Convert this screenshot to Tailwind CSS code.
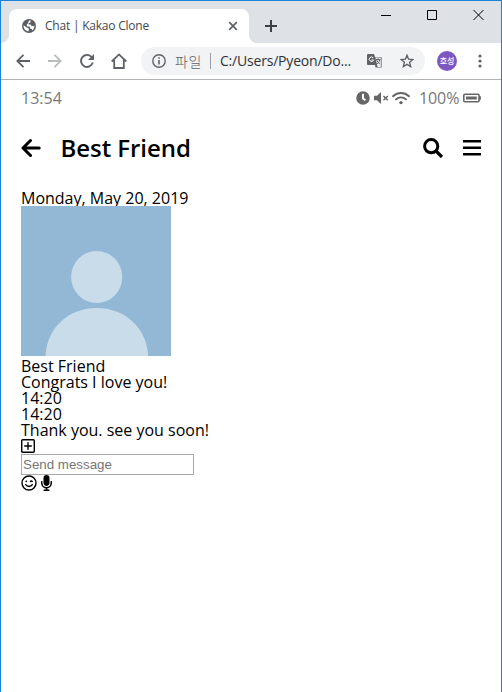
<!DOCTYPE html>
<html lang="en">
<head>
<meta charset="utf-8">
<title>Chat | Kakao Clone</title>
<script src="https://cdn.jsdelivr.net/npm/@tailwindcss/browser@4"></script>
</head>
<body class="bg-white">
<div class="flex h-[692px] w-[502px] flex-col overflow-hidden border-x border-t border-[#1883d7] bg-white">
  <!-- Tab strip -->
  <div class="flex h-[42px] shrink-0 bg-[#dee1e6]">
    <div class="flex w-2 items-end bg-white"><div class="h-full w-2 rounded-br-lg bg-[#dee1e6]"></div></div>
    <div class="bg-[#dee1e6] pt-2">
      <div class="flex h-[34px] w-[240px] items-center rounded-t-lg bg-white pl-[13px] pr-[11px]">
        <svg class="size-[14px]" viewBox="0 0 14 14"><circle cx="7" cy="7" r="7" fill="#5a5d61"/><path d="M1.500 6.200 4.700 8.400 6.700 9.200V12.300C3.600 12.200 1.400 9.600 1.500 6.200ZM7 1.600h1.800L8.300 3.400 6.600 4.200v1.400h2.200l.8 1.600 2.800-.5c.1 2-.8 3.700-2.200 4.700L9.600 9.800H8.300L7.600 7.600H5L4.700 5.800 5.800 4.600Z" fill="#fff"/></svg>
        <span class="ml-[9px] whitespace-nowrap font-['Open_Sans','Noto_Sans_CJK_KR',sans-serif] text-[12px] leading-4 tracking-[-0.22px] text-[#45484c]">Chat | Kakao Clone</span>
        <svg class="ml-auto size-[10px]" viewBox="0 0 10 10" stroke="#5f6368" stroke-width="1.7"><path d="m1.200 1.200 7.600 7.600m0-7.600L1.200 8.800"/></svg>
      </div>
    </div>
    <div class="flex w-2 bg-white"><div class="h-full w-2 rounded-bl-lg bg-[#dee1e6]"></div></div>
    <div class="flex flex-1 pl-2">
      <svg class="mt-[19px] size-3" viewBox="0 0 12 12" stroke="#3c4043" stroke-width="2"><path d="M6 0v12M0 6h12"/></svg>
      <svg class="ml-auto mr-[17px] mt-2 h-3 w-[103px]" viewBox="0 0 103 12" fill="none" stroke="#000"><path d="M0 6.500h10M46.500 1.500h9v9h-9z"/><path d="m92.500 1 10 10m0-10-10 10"/></svg>
    </div>
  </div>
  <!-- Toolbar -->
  <div class="flex h-9 shrink-0 items-center pl-[15px] text-[#5f6368]">
    <svg class="size-[14px] shrink-0" viewBox="0 0 14 14" fill="none" stroke="#5f6368" stroke-width="1.8"><path d="M14 7H1.500M7.500.800 1.300 7l6.200 6.200"/></svg>
    <svg class="ml-[18px] size-[14px] shrink-0" viewBox="0 0 14 14" fill="none" stroke="#babcbe" stroke-width="1.800"><path d="M0 7h12.500M6.500.800 12.700 7l-6.200 6.200"/></svg>
    <svg class="ml-[18px] size-[14px] shrink-0" viewBox="0 0 14 14" fill="none" stroke="#5f6368" stroke-width="1.900"><path d="M12.800 8.600A6 6 0 1 1 11.400 2.800L12.500 4"/><path d="M14 0v6H8Z" fill="#5f6368" stroke="none"/></svg>
    <svg class="ml-[17px] h-4 w-4 shrink-0" viewBox="0 0 16 16" fill="none" stroke="#5f6368" stroke-width="1.800"><path d="M.700 8.500 8 1.400l7.300 7.100M3.200 7v8h9.600V7"/></svg>
    <div class="ml-[14px] flex h-7 w-[284px] shrink-0 items-center rounded-full bg-[#f1f3f4] pl-[11px] pr-[11px]">
      <svg class="size-[14px] shrink-0" viewBox="0 0 14 14" fill="none" stroke="#5f6368" stroke-width="1.400"><circle cx="7" cy="7" r="6.200"/><path d="M7 6v4.500M7 3.300v1.500" stroke-width="1.600"/></svg>
      <span class="ml-[9px] w-[31px] whitespace-nowrap font-['Noto_Sans_CJK_KR',sans-serif] text-[14px] font-light leading-[18px] tracking-[0.6px] text-[#5f6368]">파일</span>
      <span class="ml-1 h-4 w-px bg-[#9a9da1]"></span>
      <span class="ml-[9px] whitespace-nowrap font-['Open_Sans',sans-serif] text-[14px] leading-5 tracking-[-0.2px] text-[#303236]">C:/Users/Pyeon/Do...</span>
      <svg class="ml-auto h-[14px] w-[15px] shrink-0" viewBox="0 0 15 14"><path d="M0 1q0-1 1-1h6l1 3h6q.6 0 .6.600V13q0 .600-.6.600H8.500L8 11H1q-1 0-1-1Z" fill="#5f6368"/><path d="m8.400 3.600 2.200 9.400h3.200V3.600Z" fill="#f1f3f4"/><path d="M6.300 3.900a2.200 2.200 0 1 0 .3 2.100H4.600" fill="none" stroke="#fff"/><path d="M9 5.500h4.500M11.200 4.300v1.200M9.700 6c.6 1.800 1.700 3 3.200 4m-.2-4c-.5 1.800-1.300 3-2.800 4" fill="none" stroke="#5f6368"/></svg>
      <svg class="ml-[18px] size-[14px] shrink-0" viewBox="0 0 14 14" fill="none" stroke="#5f6368" stroke-width="1.400"><path d="m7 1.300 1.600 3.900 4.300.3-3.300 2.800 1.100 4.300L7 10.400l-3.700 2.200 1.100-4.300-3.300-2.800 4.300-.3Z"/></svg>
    </div>
    <div class="ml-3 flex size-5 shrink-0 items-center justify-center rounded-full bg-[#7e57c2] font-['Noto_Sans_CJK_KR',sans-serif] text-[8px] font-medium leading-none text-white">호성</div>
    <svg class="ml-[21px] h-[14px] w-1 shrink-0" viewBox="0 0 4 14" fill="#5f6368"><circle cx="2" cy="2" r="1.600"/><circle cx="2" cy="7" r="1.600"/><circle cx="2" cy="12" r="1.600"/></svg>
  </div>
  <div class="h-px shrink-0 bg-[#b2b2b2]"></div>
  <!-- Page -->
  <main class="flex flex-1 flex-col px-5 font-['Open_Sans',sans-serif] text-[16px] leading-4 text-black">
    <div class="mt-[10px] flex h-4 items-center text-[#666]">
      <span class="text-[#777]">13:54</span>
      <svg class="ml-auto size-[14px]" viewBox="0 0 512 512" fill="currentColor"><path fill-rule="evenodd" d="M256 8a248 248 0 1 0 0 496 248 248 0 0 0 0-496Zm57 350-88-64a12 12 0 0 1-5-10V116q0-12 12-12h48q12 0 12 12v138l66 48q9 7 3 16l-29 39q-7 9-19 1Z"/></svg>
      <svg class="ml-1 h-[14px] w-[15px]" viewBox="0 0 15 14" fill="currentColor"><path d="M0 4.700h3L7 1v12L3 9.300H0Z"/><path d="m9.500 5 4.300 4.300m0-4.300L9.500 9.300" stroke="currentColor" stroke-width="1.500"/></svg>
      <svg class="ml-[3px] h-[14px] w-[18px]" viewBox="0 0 18 14" fill="none" stroke="currentColor" stroke-width="1.900" stroke-linecap="round"><path d="M1 5.200c4.600-4.300 11.400-4.300 16 0M4 8.400c2.900-2.600 7.100-2.600 10 0"/><circle cx="9" cy="11.600" r="1.700" fill="currentColor" stroke="none"/></svg>
      <span class="ml-[9px] w-10 tracking-[-0.1px] text-[#777]">100%</span>
      <svg class="ml-1 h-[10px] w-[18px]" viewBox="0 0 18 10" fill="none" stroke="currentColor"><rect x=".8" y="1.200" width="15.200" height="7.600" rx="1" stroke-width="1.600"/><path d="M17 3.300v3.400" stroke-width="1.800"/><path d="M3 5h10.800" stroke-width="3"/></svg>
    </div>
    <header class="mt-[30px] flex h-6 items-center">
      <svg class="size-5 shrink-0" viewBox="0 0 20 20" fill="none" stroke="#000" stroke-width="3" stroke-linecap="round" stroke-linejoin="round"><path d="M9.500 2.500 2 10l7.500 7.500M2.500 10H18.200"/></svg>
      <h1 class="ml-[19.5px] whitespace-nowrap text-[24px] font-semibold leading-6 tracking-[-0.05px]">Best Friend</h1>
      <svg class="ml-auto size-5 shrink-0" viewBox="0 0 20 20" fill="none" stroke="#000" stroke-width="3"><circle cx="8.200" cy="8.200" r="6.600"/><path d="m13 13 6 6" stroke-width="3.300"/></svg>
      <svg class="ml-5 h-5 w-[18px] shrink-0" viewBox="0 0 18 20" fill="#000"><path d="M0 2h18v2.500H0zM0 8.500h18V11H0zM0 15h18v2.500H0z"/></svg>
    </header>
    <span class="mt-[30px]">Monday, May 20, 2019</span>
    <svg class="mb-0.5 size-[150px] shrink-0" viewBox="0 0 150 150"><path fill="#92b8d6" d="M0 0h150v150H0z"/><ellipse cx="75.700" cy="71" rx="25.600" ry="26" fill="#c9dcea"/><path d="M24.500 150C26 121 48 102 75.700 102s49.800 19 51.500 48Z" fill="#c9dcea"/></svg>
    <span>Best Friend</span>
    <span>Congrats I love you!</span>
    <span>14:20</span>
    <span>14:20</span>
    <span>Thank you. see you soon!</span>
    <svg class="mb-0.5 mt-px size-[14px]" viewBox="0 0 14 14" fill="none" stroke="#000"><rect x=".7" y=".7" width="12.600" height="12.600" rx="1" stroke-width="1.400"/><path d="M7 3.200v7.600M3.200 7h7.600" stroke-width="1.400"/></svg>
    <input type="text" placeholder="Send message" class="-mt-px h-[21px] w-[173px] border border-[#a9a9a9] bg-white px-px font-['Liberation_Sans',sans-serif] text-[13.333px] leading-4 placeholder:text-[#757575]">
    <div class="flex h-4 items-center">
      <svg class="size-4" viewBox="0 0 16 16" fill="none" stroke="#000" stroke-width="1.400" stroke-linecap="round"><circle cx="8" cy="8" r="7"/><path d="M4.700 9.700c1.500 2.300 5.100 2.300 6.600 0"/><path d="M9.500 6.500c.4-.6 1.300-.6 1.700 0"/><circle cx="5.300" cy="6.300" r=".9" fill="#000" stroke="none"/></svg>
      <svg class="ml-1 h-4 w-[11px]" viewBox="0 0 352 512" fill="#000"><path d="M176 352c53 0 96-43 96-96V96a96 96 0 0 0-192 0v160c0 53 43 96 96 96Zm160-160h-16q-16 0-16 16v48a128 128 0 0 1-256 0v-48q0-16-16-16H16q-16 0-16 16v43c0 89 64 169 152 181v32H96q-16 0-16 16v16q0 16 16 16h160q16 0 16-16v-16q0-16-16-16h-56v-33c86-12 152-85 152-175v-48q0-16-16-16Z"/></svg>
    </div>
  </main>
</div>
</body>
</html>
